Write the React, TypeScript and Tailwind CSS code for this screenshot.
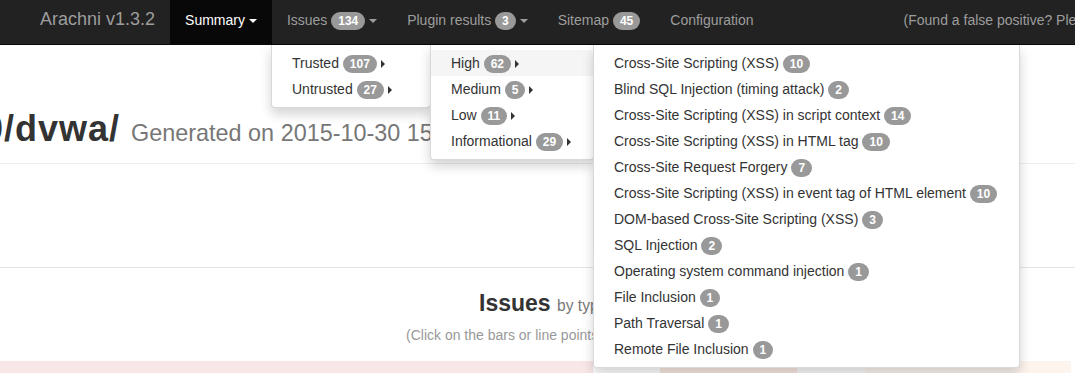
import React from "react";

const Badge = ({ n }: { n: string | number }) => (
  <span className="inline-block min-w-[10px] rounded-[10px] bg-[#999] px-[7px] py-[3px] text-center align-middle text-[12px] font-bold leading-none text-white">
    {n}
  </span>
);

const Caret = () => (
  <span className="inline-block h-0 w-0 border-x-[4px] border-t-[4px] border-x-transparent border-t-current align-middle" />
);

const RightCaret = () => (
  <span className="inline-block h-0 w-0 border-y-[4px] border-l-[4px] border-y-transparent border-l-[#333] align-middle" />
);

type Item = { label: string; n: number; sub?: boolean; active?: boolean };

const Menu = ({ items, className }: { items: Item[]; className: string }) => (
  <ul
    className={
      "absolute top-[45px] rounded-b-[4px] border border-t-0 border-[rgba(0,0,0,0.15)] bg-white py-[5px] shadow-[0_6px_12px_rgba(0,0,0,0.175)] " +
      className
    }
  >
    {items.map((it) => (
      <li
        key={it.label}
        className={
          "h-[26px] overflow-hidden whitespace-nowrap px-[20px] py-[3px] leading-[20px] text-[#333] " +
          (it.active ? "bg-[#f5f5f5]" : "")
        }
      >
        {it.label} <Badge n={it.n} />
        {it.sub ? (
          <>
            {" "}
            <RightCaret />
          </>
        ) : null}
      </li>
    ))}
  </ul>
);

export default function App() {
  const trust: Item[] = [
    { label: "Trusted", n: 107, sub: true },
    { label: "Untrusted", n: 27, sub: true },
  ];
  const severity: Item[] = [
    { label: "High", n: 62, sub: true, active: true },
    { label: "Medium", n: 5, sub: true },
    { label: "Low", n: 11, sub: true },
    { label: "Informational", n: 29, sub: true },
  ];
  const types: Item[] = [
    { label: "Cross-Site Scripting (XSS)", n: 10 },
    { label: "Blind SQL Injection (timing attack)", n: 2 },
    { label: "Cross-Site Scripting (XSS) in script context", n: 14 },
    { label: "Cross-Site Scripting (XSS) in HTML tag", n: 10 },
    { label: "Cross-Site Request Forgery", n: 7 },
    { label: "Cross-Site Scripting (XSS) in event tag of HTML element", n: 10 },
    { label: "DOM-based Cross-Site Scripting (XSS)", n: 3 },
    { label: "SQL Injection", n: 2 },
    { label: "Operating system command injection", n: 1 },
    { label: "File Inclusion", n: 1 },
    { label: "Path Traversal", n: 1 },
    { label: "Remote File Inclusion", n: 1 },
  ];

  return (
    <div className="relative h-[373px] w-[1075px] overflow-hidden bg-white font-['Liberation_Sans',Arial,sans-serif] text-[14px] text-[#333]">
      {/* Navbar */}
      <nav className="flex h-[45px] overflow-hidden whitespace-nowrap border-b border-[#080808] bg-[#222] text-[#9d9d9d]">
        <div className="shrink-0 pl-[40px] pr-[15px] pt-[9px] text-[18px] leading-[20px]">Arachni v1.3.2</div>
        <ul className="flex shrink-0">
          <li className="bg-[#080808] px-[15px] pt-[10px] leading-[20px] text-white">
            Summary <Caret />
          </li>
          <li className="px-[15px] pt-[10px] leading-[20px]">
            Issues <Badge n={134} /> <Caret />
          </li>
          <li className="px-[15px] pt-[10px] leading-[20px]">
            Plugin results <Badge n={3} /> <Caret />
          </li>
          <li className="px-[15px] pt-[10px] leading-[20px]">
            Sitemap <Badge n={45} />
          </li>
          <li className="px-[15px] pt-[10px] leading-[20px]">Configuration</li>
        </ul>
        <div className="ml-[135px] shrink-0 pt-[10px] leading-[20px]">
          (Found a false positive? Please let us know about it.)
        </div>
      </nav>

      {/* Page header */}
      <div className="border-b border-[#eee] pb-[14px] pt-[64px]">
        <h1 className="whitespace-nowrap text-[36px] font-bold leading-[1.1]">
          <span className="ml-[-17px] tracking-[1px]">0/dvwa/</span>{" "}
          <span className="ml-[1px] text-[23.4px] font-normal text-[#777]">Generated on 2015-10-30 15:43:11 +0200</span>
        </h1>
      </div>

      <div className="h-[104px] border-b border-[#e5e5e5]" />

      <div className="pt-[23px]">
        <h2 className="whitespace-nowrap pl-[479px] text-[23px] font-bold leading-[1.1]">
          Issues <span className="text-[15.6px] font-normal text-[#777]">by type</span>
        </h2>
        <p className="mt-[11px] whitespace-nowrap pl-[406px] leading-[17px] text-[#999]">
          (Click on the bars or line points to see the relevant issues.)
        </p>
      </div>

      <div className="mt-[17px] flex h-[14px]">
        <div className="w-[593px] bg-[#f9e6e6]" />
        <div className="w-[67px] bg-white" />
        <div className="w-[137px] bg-[#f9e9e0]" />
        <div className="w-[68px] bg-[#fbfbfb]" />
        <div className="w-[206px] bg-[#fdf4ee]" />
      </div>

      {/* Dropdowns */}
      <Menu items={trust} className="left-[271px] z-10 w-[160px]" />
      <Menu items={severity} className="left-[430px] z-20 w-[164px]" />
      <Menu items={types} className="left-[593px] z-30 w-[427px]" />
    </div>
  );
}
